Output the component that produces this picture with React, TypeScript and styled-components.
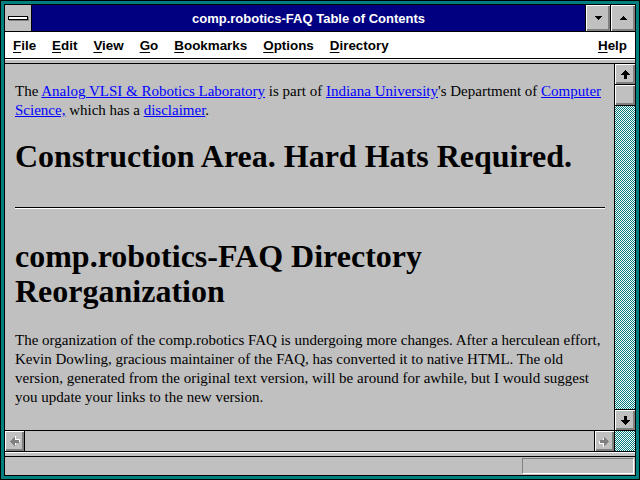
import React from "react";
import styled, { createGlobalStyle } from "styled-components";

const GlobalStyle = createGlobalStyle`
  html, body {
    margin: 0;
    padding: 0;
    width: 640px;
    height: 480px;
    overflow: hidden;
    background: #008080;
  }
`;

const Frame = styled.div`
  width: 640px;
  height: 480px;
  box-sizing: border-box;
  background: #008080;
  border: 1px solid #000;
  padding: 3px;
  display: flex;
`;

const Inner = styled.div`
  flex: 1;
  border: 1px solid #000;
  display: flex;
  flex-direction: column;
  background: #c0c0c0;
  min-height: 0;
`;

const TitleBar = styled.div`
  height: 26px;
  border-bottom: 1px solid #000;
  display: flex;
  background: #000080;
`;

const SysBox = styled.div`
  width: 26px;
  border-right: 1px solid #000;
  background: #c0c0c0;
  display: flex;
  align-items: center;
  justify-content: center;
`;

const SysBar = styled.div`
  width: 18px;
  height: 2px;
  background: #fff;
  border: 1px solid #000;
  box-shadow: 1px 1px 0 #808080;
`;

const Title = styled.div`
  flex: 1;
  display: flex;
  align-items: center;
  justify-content: center;
  color: #fff;
  font: bold 13px "Liberation Sans", Arial, sans-serif;
`;

const CapButton = styled.div`
  width: 24px;
  border-left: 1px solid #000;
  background: #c0c0c0;
  box-shadow: inset 1px 1px 0 #fff, inset -1px -1px 0 #808080, inset -2px -2px 0 #808080;
  display: flex;
  align-items: center;
  justify-content: center;
`;

const MenuBar = styled.div`
  height: 26px;
  border-bottom: 1px solid #000;
  background: #fff;
  display: flex;
  align-items: center;
  font: bold 13.4px "Liberation Sans", Arial, sans-serif;
  color: #000;
`;

const MenuItem = styled.span<{ $right?: boolean }>`
  padding: 0 8px;
  margin-left: ${(p) => (p.$right ? "auto" : "0")};
  u {
    text-decoration: underline;
    text-underline-offset: 2px;
  }
`;

const Strip = styled.div`
  height: 3px;
  background: #c0c0c0;
  border-top: 1px solid #fff;
  border-bottom: 1px solid #000;
`;

const ViewArea = styled.div`
  height: 366px;
  display: flex;
  border-bottom: 1px solid #000;
`;

const Page = styled.div`
  flex: 1;
  overflow: hidden;
  padding: 18px 9px 0 10px;
  font: 15px "Liberation Serif", "Times New Roman", serif;
  line-height: 19px;
  color: #000;
  a {
    color: #0000ff;
    text-decoration: underline;
  }
`;

const Para = styled.p<{ $gap?: number }>`
  margin: ${(p) => p.$gap ?? 0}px 0 0;
`;

const Head1 = styled.h1`
  font: bold 32px "Liberation Serif", "Times New Roman", serif;
  line-height: 36px;
  margin: 18px 0 0;
`;

const Rule = styled.div`
  height: 1px;
  background: #000;
  border-bottom: 1px solid #fff;
  margin: 33px 0 0;
`;

const Head2 = styled.h2`
  font: bold 32px "Liberation Serif", "Times New Roman", serif;
  line-height: 35px;
  margin: 30px 0 0;
`;

const VScroll = styled.div`
  width: 20px;
  border-left: 1px solid #000;
  display: flex;
  flex-direction: column;
`;

const Checker = styled.div`
  flex: 1;
  background: repeating-conic-gradient(#008080 0% 25%, #ffffff 0% 50%) 0 0 / 2px 2px;
`;

const SButton = styled.div<{ $edge?: "top" | "bottom" | "left" | "right" }>`
  width: 20px;
  height: 20px;
  box-sizing: border-box;
  flex: none;
  background: #c0c0c0;
  box-shadow: inset 1px 1px 0 #fff, inset -1px -1px 0 #808080, inset -2px -2px 0 #808080;
  display: flex;
  align-items: center;
  justify-content: center;
  ${(p) =>
    p.$edge === "top"
      ? "border-bottom: 1px solid #000; height: 21px;"
      : p.$edge === "bottom"
      ? "border-top: 1px solid #000; height: 21px;"
      : p.$edge === "left"
      ? "border-right: 1px solid #000;"
      : p.$edge === "right"
      ? "border-left: 1px solid #000;"
      : ""}
`;

const Thumb = styled(SButton)`
  border-bottom: 1px solid #000;
  height: 21px;
`;

const HScroll = styled.div`
  height: 20px;
  border-bottom: 1px solid #000;
  display: flex;
`;

const HTrack = styled.div`
  flex: 1;
  background: #c0c0c0;
`;

const Corner = styled(Checker)`
  flex: none;
  width: 20px;
  border-left: 1px solid #000;
`;

const StatusBar = styled.div`
  height: 18px;
  display: flex;
  justify-content: flex-end;
  padding: 1px 1px 1px 0;
  box-sizing: border-box;
`;

const StatusBox = styled.div`
  width: 112px;
  box-sizing: border-box;
  border-top: 1px solid #808080;
  border-left: 1px solid #808080;
  border-bottom: 1px solid #fff;
  border-right: 1px solid #fff;
`;

const Tri = ({ up }: { up?: boolean }) => (
  <svg width="9" height="6" viewBox="0 0 9 6" shapeRendering="crispEdges">
    <polygon points={up ? "4.5,1 8,5 1,5" : "1,1 8,1 4.5,5"} fill="#000" />
  </svg>
);

const Arrow = ({ dir, off }: { dir: "up" | "down" | "left" | "right"; off?: boolean }) => {
  const rot = { up: 0, right: 90, down: 180, left: 270 }[dir];
  const pts = "5.5,1 10,6 7,6 7,10 4,10 4,6 1,6";
  return (
    <svg width="11" height="11" viewBox="0 0 11 11" shapeRendering="crispEdges">
      <g transform={`rotate(${rot} 5.5 5.5)`}>
        {off && <polygon points={pts} fill="#fff" transform="translate(1 1)" />}
        <polygon points={pts} fill={off ? "#808080" : "#000"} />
      </g>
    </svg>
  );
};

const menus = ["File", "Edit", "View", "Go", "Bookmarks", "Options", "Directory"];

export default function App() {
  return (
    <>
      <GlobalStyle />
      <Frame>
        <Inner>
          <TitleBar>
            <SysBox>
              <SysBar />
            </SysBox>
            <Title>comp.robotics-FAQ Table of Contents</Title>
            <CapButton>
              <Tri />
            </CapButton>
            <CapButton>
              <Tri up />
            </CapButton>
          </TitleBar>
          <MenuBar>
            {menus.map((m) => (
              <MenuItem key={m}>
                <u>{m[0]}</u>
                {m.slice(1)}
              </MenuItem>
            ))}
            <MenuItem $right>
              <u>H</u>elp
            </MenuItem>
          </MenuBar>
          <Strip />
          <ViewArea>
            <Page>
              <Para>
                The <a>Analog VLSI &amp; Robotics Laboratory</a> is part of <a>Indiana University</a>'s
                Department of <a>Computer Science,</a> which has a <a>disclaimer</a>.
              </Para>
              <Head1>Construction Area. Hard Hats Required.</Head1>
              <Rule />
              <Head2>comp.robotics-FAQ Directory Reorganization</Head2>
              <Para $gap={22}>
                The organization of the comp.robotics FAQ is undergoing more changes. After a herculean
                effort, Kevin Dowling, gracious maintainer of the FAQ, has converted it to native HTML. The
                old version, generated from the original text version, will be around for awhile, but I
                would suggest you update your links to the new version.
              </Para>
            </Page>
            <VScroll>
              <SButton $edge="top">
                <Arrow dir="up" />
              </SButton>
              <Thumb />
              <Checker />
              <SButton $edge="bottom">
                <Arrow dir="down" />
              </SButton>
            </VScroll>
          </ViewArea>
          <HScroll>
            <SButton $edge="left">
              <Arrow dir="left" off />
            </SButton>
            <HTrack />
            <SButton $edge="right">
              <Arrow dir="right" off />
            </SButton>
            <Corner />
          </HScroll>
          <Strip />
          <StatusBar>
            <StatusBox />
          </StatusBar>
        </Inner>
      </Frame>
    </>
  );
}
